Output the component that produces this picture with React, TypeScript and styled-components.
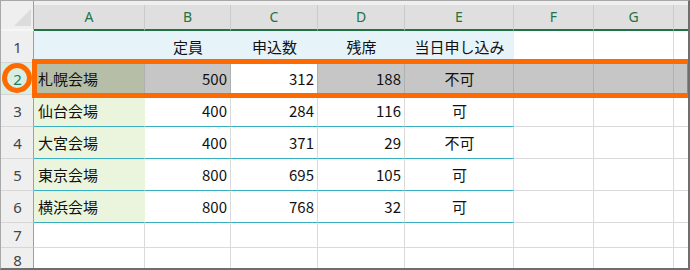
import styled, { createGlobalStyle } from "styled-components";

type Align = "left" | "right" | "center";

interface CellData {
  text: string;
  align?: Align;
  fill?: string;
}

// H is too narrow to show its letter, so its header stays blank
const COLUMNS = ["A", "B", "C", "D", "E", "F", "G", ""];

const HEAD_FILL = "#e6f4fa";
const NAME_FILL = "#ebf5de";
const SEL_FILL = "#c6c6c6";
const TEAL = "#37afc0";

const venues = [
  ["仙台会場", "400", "284", "116", "可"],
  ["大宮会場", "400", "371", "29", "不可"],
  ["東京会場", "800", "695", "105", "可"],
  ["横浜会場", "800", "768", "32", "可"],
];

const dataRow = (values: string[], nameFill: string): CellData[] => [
  { text: values[0], align: "left", fill: nameFill },
  { text: values[1], align: "right" },
  { text: values[2], align: "right" },
  { text: values[3], align: "right" },
  { text: values[4], align: "center" },
  { text: "" },
  { text: "" },
  { text: "" },
];

const rows: { cells: CellData[]; short?: boolean; table?: boolean }[] = [
  {
    table: true,
    cells: [
      { text: "", fill: HEAD_FILL },
      { text: "定員", align: "center", fill: HEAD_FILL },
      { text: "申込数", align: "center", fill: HEAD_FILL },
      { text: "残席", align: "center", fill: HEAD_FILL },
      { text: "当日申し込み", align: "center", fill: HEAD_FILL },
      { text: "" },
      { text: "" },
      { text: "" },
    ],
  },
  {
    table: true,
    cells: [
      { text: "札幌会場", align: "left", fill: "#b7bea8" },
      { text: "500", align: "right", fill: SEL_FILL },
      { text: "312", align: "right" },
      { text: "188", align: "right", fill: SEL_FILL },
      { text: "不可", align: "center", fill: SEL_FILL },
      { text: "", fill: SEL_FILL },
      { text: "", fill: SEL_FILL },
      { text: "", fill: SEL_FILL },
    ],
  },
  ...venues.map((v) => ({ table: true, cells: dataRow(v, NAME_FILL) })),
  { short: true, cells: dataRow(["", "", "", "", ""], "") },
  { short: true, cells: dataRow(["", "", "", "", ""], "") },
];

const App = () => {
  return (
    <>
      <GlobalStyle />
      <Frame>
        <TopStrip />
        <Sheet>
          <Corner>
            <svg width="17" height="17" viewBox="0 0 17 17">
              <polygon points="17,0 17,17 0,17" fill="#dcdcdc" />
            </svg>
          </Corner>
          {COLUMNS.map((c, i) => (
            <ColHead key={i}>{c}</ColHead>
          ))}

          {rows.map((row, r) => (
            <Row key={r} row={row} index={r} />
          ))}
        </Sheet>

        {/* highlight marks drawn over the sheet */}
        <RowMark />
        <NumberMark />
      </Frame>
    </>
  );
};

const Row = ({
  row,
  index,
}: {
  row: { cells: CellData[]; short?: boolean; table?: boolean };
  index: number;
}) => {
  const selected = index === 1;
  return (
    <>
      <RowHead $short={row.short} $selected={selected}>
        {index + 1}
      </RowHead>
      {row.cells.map((cell, c) => {
        const inTable = row.table && c < 5;
        const bottom = inTable ? TEAL : selected ? "#b0b0b0" : "#dadada";
        let right = selected ? "#b0b0b0" : "#dadada";
        if (cell.fill && !selected) right = cell.fill;
        if (index === 0 && c < 4) right = HEAD_FILL;
        return (
          <Cell
            key={c}
            $short={row.short}
            $align={cell.align || "left"}
            $fill={cell.fill || "#ffffff"}
            $bottom={bottom}
            $right={right}
          >
            {cell.text}
          </Cell>
        );
      })}
    </>
  );
};

const GlobalStyle = createGlobalStyle`
  html, body {
    margin: 0;
    padding: 0;
    background: #ffffff;
  }
`;

const Frame = styled.div`
  position: relative;
  width: 690px;
  height: 270px;
  box-sizing: border-box;
  overflow: hidden;
  background: #ffffff;
  border-top: 1px solid #a8a8a8;
  border-left: 1px solid #a8a8a8;
  border-right: 2px solid #6e6e6e;
  border-bottom: 2px solid #6e6e6e;
`;

const TopStrip = styled.div`
  height: 4px;
  background: #efefef;
`;

const Sheet = styled.div`
  display: grid;
  grid-template-columns: 33px 111px 86px 87px 87px 109px 80px 80px 80px;
`;

const Corner = styled.div`
  box-sizing: border-box;
  margin-top: -4px;
  height: 30px;
  background: #efefef;
  border-right: 1px solid #a0a0a0;
  border-bottom: 2px solid #f6f6f6;
  display: flex;
  align-items: flex-end;
  justify-content: flex-end;
  padding: 0 2px 3px 0;
`;

const ColHead = styled.div`
  box-sizing: border-box;
  height: 26px;
  background: #dfdfdf;
  border-right: 1px solid #cbcbcb;
  border-bottom: 2px solid #217346;
  display: flex;
  align-items: center;
  justify-content: center;
  font-family: "Noto Sans", "Open Sans", sans-serif;
  font-size: 14px;
  color: #217346;
  padding-bottom: 1px;
`;

const RowHead = styled.div<{ $short?: boolean; $selected?: boolean }>`
  box-sizing: border-box;
  height: ${(p) => (p.$short ? 25 : 32)}px;
  background: ${(p) => (p.$selected ? "#d8eee2" : "#efefef")};
  border-right: 1px solid #a0a0a0;
  border-bottom: 1px solid #d6d6d6;
  display: flex;
  align-items: center;
  justify-content: center;
  font-family: "Noto Sans", "Open Sans", sans-serif;
  font-size: 15px;
  color: ${(p) => (p.$selected ? "#217a5e" : "#444444")};
  padding-left: 1px;
`;

const Cell = styled.div<{
  $short?: boolean;
  $align: Align;
  $fill: string;
  $bottom: string;
  $right: string;
}>`
  box-sizing: border-box;
  height: ${(p) => (p.$short ? 25 : 32)}px;
  background: ${(p) => p.$fill};
  border-right: 1px solid ${(p) => p.$right};
  border-bottom: 1px solid ${(p) => p.$bottom};
  display: flex;
  align-items: center;
  justify-content: ${(p) =>
    p.$align === "right"
      ? "flex-end"
      : p.$align === "center"
      ? "center"
      : "flex-start"};
  padding: 0 3px 0 4px;
  font-family: "Noto Sans CJK JP", "Noto Sans", sans-serif;
  font-size: 15px;
  line-height: 1;
  color: #111111;
  white-space: nowrap;
`;

const RowMark = styled.div`
  position: absolute;
  left: 31px;
  top: 58px;
  width: 660px;
  height: 39px;
  box-sizing: border-box;
  border: 5px solid #ff6a00;
`;

const NumberMark = styled.div`
  position: absolute;
  left: 1px;
  top: 62px;
  width: 30px;
  height: 30px;
  box-sizing: border-box;
  border: 5px solid #ff6a00;
  border-radius: 50%;
`;

export default App;
